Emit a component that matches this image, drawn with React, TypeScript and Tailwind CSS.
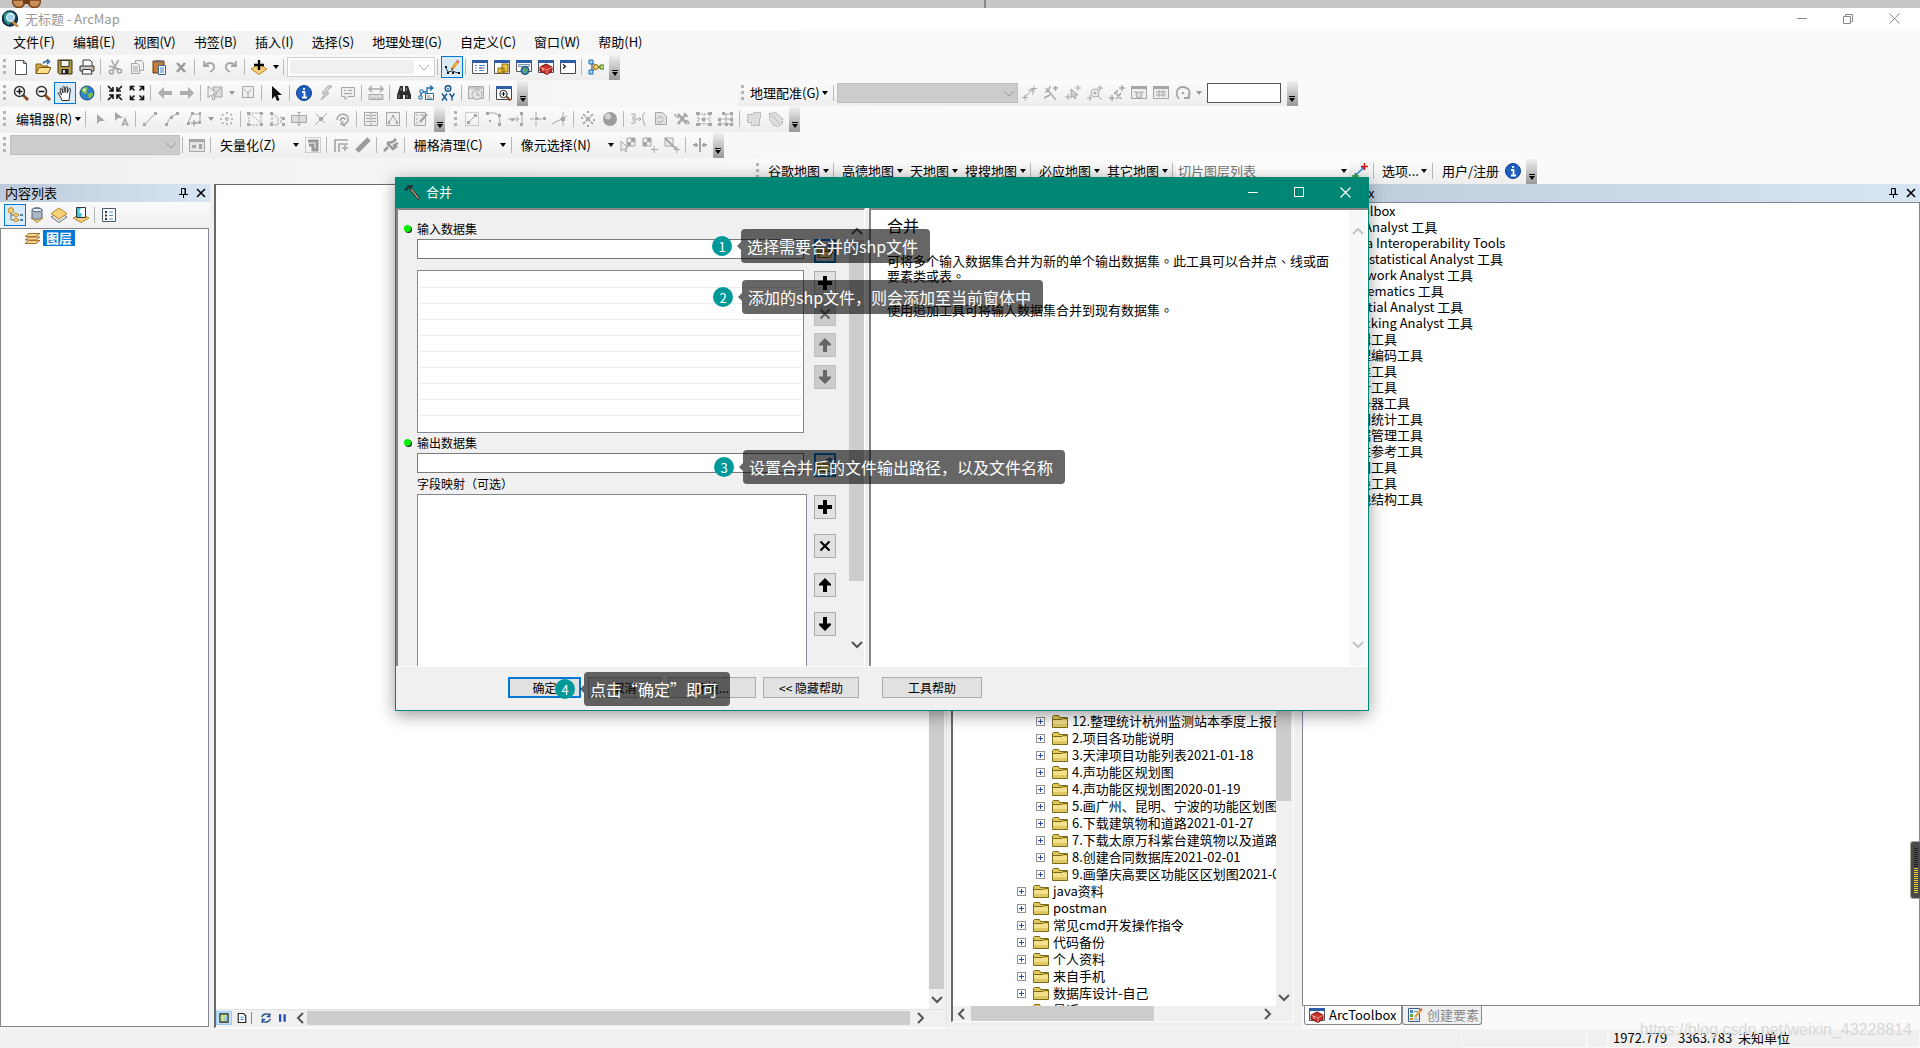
import { useState, type ReactNode } from 'react';

const G = '#a6a6a6';

// 16x16 toolbar glyphs
const ICONS: Record<string, ReactNode> = {
  newFile: <path d="M2.5 1.5h8l3 3v11h-11zM10.5 1.5v3h3" fill="#fff" stroke="#4a5560" />,
  open: (
    <>
      <path d="M1 14V5h5l1 2h6v7z" fill="#d8a93c" stroke="#7a5c14" />
      <path d="M1 14.5l3-6h12l-3 6z" fill="#ffe08a" stroke="#7a5c14" />
      <path d="M8 4.5c1-2 3-2.500 5-2M12 .5l2.500 2L12 5" fill="none" stroke="#1d5fa8" strokeWidth="1.500" />
    </>
  ),
  save: (
    <>
      <path d="M1 1h14v14H2.500L1 13.500z" fill="#b19a4c" stroke="#3c3210" />
      <path d="M4 1.500h8v6H4z" fill="#f4f4f4" stroke="#3c3210" />
      <path d="M4.500 10h7v5h-7z" fill="#222" />
      <path d="M6 11h2v3H6z" fill="#ddd" />
    </>
  ),
  print: (
    <>
      <path d="M4 7V1h7l2 2v4" fill="#fff" stroke="#333" />
      <path d="M1 7h14v5H1z" fill="#c9c9c9" stroke="#333" />
      <path d="M4 10.500h8l1 4.500H3z" fill="#fff" stroke="#333" />
      <path d="M12 8.500h2" stroke="#c79a1e" strokeWidth="1.500" />
    </>
  ),
  cut: (
    <g fill="none" stroke={G} strokeWidth="1.600">
      <path d="M4.500 1l5 10M11.500 1L6 11M2 7l10 3" />
      <circle cx="4.500" cy="13" r="2" />
      <circle cx="12.500" cy="12" r="2" />
    </g>
  ),
  copy: (
    <g fill="#eee" stroke={G}>
      <path d="M6.500 1.500h6l2 2v8h-8z" />
      <path d="M2.500 4.500h6l2 2v8h-8zM4 8h5M4 10h5M4 12h5" />
    </g>
  ),
  paste: (
    <>
      <path d="M2 2h11v12H2z" fill="#c77d33" stroke="#6b3a0e" />
      <path d="M5 1h5v3H5z" fill="#777" />
      <path d="M7.500 6.500h7v9h-7z" fill="#fff" stroke="#3b5f8f" />
      <path d="M9 9h4M9 11h4M9 13h4" stroke="#3b79c4" />
    </>
  ),
  del: <path d="M4 4l8 9M12 4l-8 9" stroke="#9a9a9a" strokeWidth="2.500" />,
  undo: <path d="M3 2v5h5M3.500 7C6 3 12 3 13 7c.5 3-2 5-4 6" fill="none" stroke={G} strokeWidth="1.800" />,
  redo: <path d="M13 2v5H8M12.500 7C10 3 4 3 3 7c-.5 3 2 5 4 6" fill="none" stroke={G} strokeWidth="1.800" />,
  addData: (
    <>
      <path d="M0 10l8-5 8 5-8 5.500z" fill="#f6cf7a" stroke="#b98a30" />
      <path d="M8 1v10M3 6h10" stroke="#000" strokeWidth="2.400" />
    </>
  ),
  editor: (
    <>
      <path d="M2 9l2 4 4-1 6 2" fill="none" stroke="#333" strokeWidth="1" />
      <path d="M1 7h2v2H1zM3 13h2v2H3zM8 13h2v2H8zM14 13h2v2h-2z" fill="#111" />
      <path d="M8 10l6-8" stroke="#e3a83b" strokeWidth="3" />
      <path d="M13 3.500l1.500-2" stroke="#e07a7a" strokeWidth="3" />
      <path d="M7 11.500l1-2.500 1.500 1z" fill="#222" />
    </>
  ),
  winToc: (
    <>
      <path d="M.5 1.500h15v13H.5z" fill="#fff" stroke="#555" />
      <path d="M0 1h16v3H0z" fill="#2d5da8" />
      <path d="M3 6.500h2M7 6.500h6M3 9h2M7 9h6M3 11.500h2M7 11.500h5" stroke="#4a90d0" />
      <path d="M7 9h3" stroke="#d04a3a" />
    </>
  ),
  winCatalog: (
    <>
      <path d="M.5 1.500h15v13H.5z" fill="#fff" stroke="#555" />
      <path d="M0 1h16v3H0z" fill="#2d5da8" />
      <path d="M8 5h6v8H8zM4 9h6v5H4z" fill="#e8c53a" stroke="#8a6b0c" />
    </>
  ),
  winSearch: (
    <>
      <path d="M.5 1.500h15v11H.5z" fill="#fff" stroke="#555" />
      <path d="M0 1h16v3H0z" fill="#2d5da8" />
      <path d="M2.500 5.500h11v2h-11z" fill="#dfe9f4" stroke="#7a98b8" />
      <circle cx="9" cy="11.500" r="4" fill="#3f8ccc" stroke="#245" />
      <path d="M7 10l3-1 1 2-2 3-2-1z" fill="#5fae4c" />
    </>
  ),
  toolbox: (
    <>
      <path d="M.5 1.500h15v12H.5z" fill="#fff" stroke="#555" />
      <path d="M0 1h16v3H0z" fill="#2d5da8" />
      <path d="M2 8l6-3 6 3v4l-5 3.500L2 12z" fill="#c8342b" stroke="#74150f" />
      <path d="M2 8l7 3v4M9 11l5-3" fill="none" stroke="#ee8f87" />
      <path d="M5 9.500v2" stroke="#fff" />
    </>
  ),
  winPython: (
    <>
      <path d="M.5 1.500h15v13H.5z" fill="#fff" stroke="#444" />
      <path d="M0 1h16v3H0z" fill="#2d5da8" />
      <path d="M3 5.500l2.500 2L3 9.500" fill="none" stroke="#111" strokeWidth="1.200" />
    </>
  ),
  model: (
    <>
      <path d="M4 3v10M4 3l4 5M4 13l4-5h5" fill="none" stroke="#333" />
      <path d="M1 1h4v4H1zM1 11h4v4H1z" fill="#9fd4f5" stroke="#1b6fb0" />
      <circle cx="8" cy="8" r="2.400" fill="#f6d65a" stroke="#8a6b0c" />
      <path d="M12 6h4v4h-4z" fill="#b4dc7a" stroke="#4b7d1e" />
    </>
  ),
  zoomIn: (
    <>
      <path d="M10 10l5 5" stroke="#8c4a20" strokeWidth="2.800" />
      <circle cx="6.500" cy="6.500" r="5" fill="#fff" stroke="#333" strokeWidth="1.500" />
      <path d="M6.500 3.500v6M3.500 6.500h6" stroke="#111" strokeWidth="1.600" />
    </>
  ),
  zoomOut: (
    <>
      <path d="M10 10l5 5" stroke="#8c4a20" strokeWidth="2.800" />
      <circle cx="6.500" cy="6.500" r="5" fill="#fff" stroke="#333" strokeWidth="1.500" />
      <path d="M3.500 6.500h6" stroke="#111" strokeWidth="1.600" />
    </>
  ),
  pan: (
    <path
      d="M5 15.500L3 11 .8 8.200c.5-1 1.500-.7 2.200.1L4.500 10 3 4c.4-1 1.400-.8 1.700.2L6 8l-.2-6c.5-1 1.500-.8 1.700 0L8 7.500 9 2c.6-.8 1.500-.5 1.500.5L10.200 8l2-4.500c.7-.6 1.500-.2 1.300.8L12.500 11 12 15.500z"
      fill="#fff"
      stroke="#333"
    />
  ),
  globe: (
    <>
      <circle cx="8" cy="8" r="7" fill="#2f7fcf" stroke="#1f4f86" />
      <path d="M3 4c3-3 6-2 6-1s-2 2-1 4-3 3-4 1-2-2-1-4zM9 9c3-1 5-2 5 0s-3 5-4 4-2-3-1-4z" fill="#7cbb4a" />
      <circle cx="5.500" cy="5" r="1.800" fill="#fff" opacity=".6" />
    </>
  ),
  shrink: (
    <path
      d="M1 1l4.500 4.500M15 1l-4.500 4.500M1 15l4.500-4.500M15 15l-4.500-4.500M6 2v4H2M10 2v4h4M6 14v-4H2M10 14v-4h4"
      fill="none"
      stroke="#111"
      strokeWidth="1.600"
    />
  ),
  expand: (
    <path
      d="M1.500 1.500l4 4M14.500 1.500l-4 4M1.500 14.500l4-4M14.500 14.500l-4-4M1.500 5.500v-4h4M14.500 5.500v-4h-4M1.500 10.500v4h4M14.500 10.500v4h-4"
      fill="none"
      stroke="#111"
      strokeWidth="1.600"
    />
  ),
  back: <path d="M1 8l6-6v4h8v4H7v4z" fill="#adadad" />,
  forward: <path d="M15 8L9 2v4H1v4h8v4z" fill="#adadad" />,
  selectFeat: (
    <g stroke={G}>
      <path d="M6 2h9v10H8z" fill="#dcdcdc" />
      <path d="M9 8l5-5" fill="none" />
      <path d="M1 1v12l3-3 2 5 2-1-2-5h4z" fill="#eee" />
    </g>
  ),
  clearSel: <path d="M2.500 1.500h11v11h-11zM4 4l4 4 3-4M8 8v4" fill="#eee" stroke={G} />,
  pointer: <path d="M4 1v13l3-3 2 5 2.500-1-2-5h4.500z" fill="#111" />,
  info: (
    <>
      <circle cx="8" cy="8" r="7.500" fill="#1f5fc4" stroke="#123e86" />
      <path d="M8 3v2M6 7h2.500v5M6 12.500h5" stroke="#fff" strokeWidth="1.800" fill="none" />
    </>
  ),
  bolt: <path d="M10 1L4 8l3 .5L3 15l8-7-3-.5L14 1z" fill="#d8d8d8" stroke={G} />,
  popup: <path d="M1.500 2.500h13v9H8l-3 3v-3H1.500zM4 5.500h2M8 5.500h4M4 8.500h8" fill="#eee" stroke={G} />,
  measure: (
    <g stroke={G} fill="none">
      <path d="M1 4h14M4 1L1 4l3 3M12 1l3 3-3 3" strokeWidth="1.400" />
      <path d="M1 9.500h14v5H1zM4 12v2M7 12v2M10 12v2M13 12v2" fill="#ddd" />
    </g>
  ),
  find: (
    <>
      <path d="M4 1h3v5l1 1 1-1V1h3l3 9v4H9v-4H7v4H1v-4z" fill="#2e2e2e" />
      <path d="M3 10v3M11 10v3M5 3v3M10.500 3v3" stroke="#8c8c8c" />
    </>
  ),
  route: (
    <>
      <path d="M3 13V7h6V3h6M12 .5L15 3l-3 2.500" fill="none" stroke="#1c6ea4" strokeWidth="1.300" />
      <path d="M1 11h3v3H1zM2 5h3v3H2z" fill="#fff" stroke="#1c6ea4" />
      <path d="M7.500 8.500h8v6h-8z" fill="#fff" stroke="#1c6ea4" />
      <path d="M9 11h3M9 13h5" stroke="#888" />
    </>
  ),
  goXY: (
    <g fill="none" stroke="#1c5f96" strokeWidth="1.500">
      <circle cx="8" cy="3.500" r="2.800" />
      <path d="M8 3v1.500M2 8.500l5 7M7 8.500l-5 7M9.500 8.500L12 12l2.500-3.500M12 12v3.500" />
    </g>
  ),
  time: (
    <g fill="#e6e6e6" stroke={G}>
      <path d="M.5 1.500h15v12H.5zM.5 3h15" />
      <circle cx="9" cy="9.500" r="5" />
      <path d="M9 6v4h3" />
    </g>
  ),
  viewer: (
    <>
      <path d="M.5 1.500h15v13H.5z" fill="#fff" stroke="#444" />
      <path d="M0 1h16v3H0z" fill="#2d5da8" />
      <path d="M10.500 11.500l4 4" stroke="#8c4a20" strokeWidth="2" />
      <circle cx="7.500" cy="9" r="3.700" fill="#fff" stroke="#222" />
      <path d="M7.500 7v4M5.500 9h4" stroke="#111" />
    </>
  ),
  editTool: <path d="M5 3v10l3-3h5z" fill={G} />,
  editNote: (
    <>
      <path d="M1 1v9l3-3h5z" fill={G} />
      <path d="M8 15l3-7 3 7M9 13h4" fill="none" stroke={G} strokeWidth="1.500" />
    </>
  ),
  line: (
    <>
      <path d="M3 13L13 3" stroke={G} />
      <path d="M1 12h3v3H1zM12 1h3v3h-3z" fill={G} />
    </>
  ),
  arc: (
    <>
      <path d="M3 14C4 8 7 5 13 3" stroke={G} fill="none" />
      <path d="M1 12h3v3H1zM6 5h3v3H6zM12 1h3v3h-3z" fill={G} />
    </>
  ),
  trace: (
    <>
      <path d="M2 12L6 3h8v9H9" stroke={G} fill="none" />
      <path d="M5 1h3v3H5zM13 1h2v3h-2zM1 11h3v3H1zM12 10h3v3h-3z" fill={G} />
      <path d="M8 9v6M5 12h6" stroke="#888" />
    </>
  ),
  point: <path d="M8 1v3M8 12v3M1 8h3M12 8h3M3 3l2 2M13 3l-2 2M3 13l2-2M13 13l-2-2M6 8h4M8 6v4" stroke={G} strokeWidth="1.500" strokeDasharray="2 1" />,
  verts: (
    <>
      <path d="M2 2h12v12H2zM2 2l12 10" fill="none" stroke={G} strokeDasharray="2 1" />
      <path d="M0 1h3v3H0zM13 1h3v3h-3zM0 12h3v3H0zM13 12h3v3h-3z" fill={G} />
    </>
  ),
  reshape: (
    <>
      <path d="M3 2v12M3 2l6 5v7H3M12 5v8" fill="none" stroke={G} strokeDasharray="3 1" />
      <path d="M1 1h3v3H1zM1 12h3v3H1zM13 6h3v3h-3zM13 12h3v3h-3z" fill={G} />
    </>
  ),
  cutPoly: <path d="M.5 4.500h15v7H.5zM8 1v14M6.500 13.500h3M6.500 1.500h3" fill="#ddd" stroke={G} />,
  split: (
    <>
      <path d="M2 14L14 2M3 3l9 9" stroke={G} />
      <path d="M6 6h4v4H6z" fill={G} />
    </>
  ),
  rotate: <path d="M2 9C2 2 13 1 13 8c0 3-2 5-5 5M5 10c1-4 5-4 5-1M8 10l-2 3 4 2" fill="none" stroke={G} strokeWidth="1.600" />,
  attrs: <path d="M1.500 1.500h13v13h-13zM8 1.500v13M3 4.500h4M3 7.500h4M3 10.500h4M9 4.500h4M9 7.500h4M9 10.500h4" fill="#eee" stroke={G} />,
  sketch: (
    <>
      <path d="M1.500 1.500h13v13h-13z" fill="#eee" stroke={G} />
      <path d="M4 11l4-6 4 6" fill="none" stroke={G} />
      <path d="M3 10h2v3H3zM7 4h2v2H7zM11 10h2v3h-2z" fill={G} />
    </>
  ),
  createGray: (
    <>
      <path d="M1.500 1.500h11v13h-11zM3 4h2M3 8h2M3 12h2M7 4h4" fill="#eee" stroke={G} />
      <path d="M7 11l7-8" stroke={G} strokeWidth="2.500" />
    </>
  ),
  create: (
    <>
      <path d="M1.500 1.500h11v13h-11z" fill="#e7f0f8" stroke="#3b5f8f" />
      <path d="M3 3h3v3H3z" fill="#3f8ccc" />
      <path d="M3 7h3v3H3z" fill="#62a845" />
      <path d="M3 11h3v2H3z" fill="#d8832a" />
      <path d="M7 4.500h4M7 12h4" stroke="#7a98b8" />
      <path d="M8 10l6-7" stroke="#e3a83b" strokeWidth="2.500" />
      <path d="M13.500 3.500L15 2" stroke="#d46a6a" strokeWidth="2.500" />
    </>
  ),
  seg: (
    <>
      <path d="M1.500 1.500h13v13h-13z" fill="none" stroke={G} strokeDasharray="1 1" />
      <path d="M4 12l8-8" stroke={G} />
      <path d="M3 10h3v3H3zM10 3h3v3h-3z" fill={G} />
    </>
  ),
  fillet: (
    <>
      <path d="M1 2h6c5 0 7 3 7 12" fill="none" stroke={G} />
      <path d="M0 1h3v3H0zM12 3h3v3h-3zM12 12h3v3h-3zM3 9h2v2H3z" fill={G} />
    </>
  ),
  extend: (
    <>
      <path d="M0 8h10M14 1v14M8 5.500l3 2.500-3 2.500" fill="none" stroke={G} />
      <path d="M12 1h3v3h-3zM12 12h3v3h-3zM3 7h3v3H3z" fill={G} />
    </>
  ),
  trim: (
    <>
      <path d="M6 1v14M0 8h6M8 8h8" fill="none" stroke={G} strokeDasharray="4 1" />
      <path d="M5 6h3v3H5zM13 6h3v3h-3z" fill={G} />
    </>
  ),
  inter: (
    <>
      <path d="M0 13L15 5M11 1v14" fill="none" stroke={G} />
      <path d="M9 6h4v4H9z" fill={G} />
    </>
  ),
  explode: <path d="M8 8L3 3M8 8l5-5M8 8l-5 5M8 8l5 5M1 7h2M13 9h2M7 1h2M7 15h2" stroke={G} strokeWidth="1.800" strokeDasharray="3 1" />,
  sphere: (
    <>
      <circle cx="8" cy="8" r="7" fill="#9c9c9c" />
      <circle cx="6" cy="5.500" r="3" fill="#d4d4d4" />
    </>
  ),
  align: <path d="M1 3h4v9H1M3 5v5M6 8h5M9 6l2 2-2 2M15 1c-4 3-2 9 0 14" fill="none" stroke={G} />,
  replaceG: <path d="M3.500 1.500h7l4 4v8h-11zM5 8c1-3 5-3 6 0M11 9c-1 3-5 3-6 1" fill="#e2e2e2" stroke={G} />,
  wrench: (
    <>
      <path d="M4 3l9 10M12 3L4 13" stroke={G} strokeWidth="2.600" fill="none" />
      <path d="M1 3c0 3 3 4 5 2M15 13c0-3-3-4-4-3M10 2l4 4" stroke={G} strokeWidth="1.500" fill="none" />
    </>
  ),
  topo: (
    <>
      <path d="M2 3h12v10H2zM2 8h12M8 3v10" fill="none" stroke={G} strokeDasharray="2 1" />
      <path d="M0 1h4v3H0zM12 1h4v3h-4zM0 12h4v3H0zM12 12h4v3h-4zM6 7h3v3H6z" fill={G} />
    </>
  ),
  grid: (
    <>
      <path d="M5 3h9v10H2V8h12M8 3v10" fill="none" stroke={G} />
      <path d="M4 1h3v3H4zM12 1h3v3h-3zM0 7h3v3H0zM12 7h3v3h-3zM0 12h3v3H0zM7 12h3v3H7zM12 12h3v3h-3z" fill={G} />
    </>
  ),
  union: <path d="M1.500 3.500h6v-2h7v6h-1v7h-8v-3h-4z" fill="#ddd" stroke={G} strokeDasharray="2 1" />,
  blob: <path d="M1.500 2.500l6-1 7 6v5l-4 3-5-1-4-6zM4 4l7 8" fill="#ddd" stroke={G} strokeDasharray="2 1" />,
  panel: (
    <>
      <path d="M.5 2.500h15v12H.5z" fill="#e4e4e4" stroke={G} />
      <path d="M0 2h16v3H0zM3 8h4v3H3zM10 7h3v5h-3z" fill={G} />
    </>
  ),
  spiral: (
    <>
      <path d="M.5 .5h15v15H.5z" fill="none" stroke={G} strokeDasharray="1 1" />
      <path d="M3 4h9v9H8V8H4" fill="none" stroke="#999" strokeWidth="3" />
    </>
  ),
  corner: <path d="M2 15V3h13M6 15V7h9M9 11h6M12 8v6" fill="none" stroke={G} strokeWidth="1.600" />,
  pipe: <path d="M2 14L14 2" stroke="#9c9c9c" strokeWidth="5" />,
  plug: <path d="M1 14l4-4M4 6l6 6 4-3M4 6l6-1M10 5l3-3M10 9l5-3" stroke="#999" strokeWidth="2.500" fill="none" />,
  cellSel: (
    <>
      <path d="M7 1h8v8H7z" fill="#eee" stroke={G} />
      <path d="M11 1h4v4h-4zM7 5h4v4H7z" fill={G} />
      <path d="M1 4v10l3-2 2 3 1-1-2-3h3z" fill="#eee" stroke={G} />
    </>
  ),
  cellAdd: (
    <>
      <path d="M1 1h8v8H1z" fill="#eee" stroke={G} />
      <path d="M5 1h4v4H5zM1 5h4v4H1z" fill={G} />
      <path d="M12 9v7M9 12.500h7" stroke={G} />
    </>
  ),
  cellLine: (
    <>
      <path d="M1 1h8v8H1z" fill="#eee" stroke={G} />
      <path d="M1 1l11 11" stroke={G} strokeWidth="2" />
      <path d="M13 9v7M10 12.500h6" stroke={G} />
    </>
  ),
  gapTool: <path d="M8 1v14M1 8h5M10 8h5M4 6v4M12 6v4" stroke={G} strokeWidth="2" />,
  ctrl: (
    <>
      <path d="M3 13l9-9M7 5h5v5" fill="none" stroke={G} />
      <path d="M1 12.500h6M4 9.500v6M10 3.500h6M13 .5v6" stroke={G} />
    </>
  ),
  ctrlColor: (
    <>
      <path d="M4 12l8-8M9 4h3v3" fill="none" stroke="#1f8fe0" strokeWidth="1.500" />
      <path d="M0 13h7M3.500 10v6" stroke="#1a9a2c" strokeWidth="1.500" />
      <path d="M9 3.500h7M12.500 0v7" stroke="#d11" strokeWidth="1.500" />
    </>
  ),
  wand: <path d="M3 3l10 12M2 7l3-1M7 1l-1 4M10 3h5M12.500 1v5M1 13l6-3" stroke={G} strokeWidth="1.400" fill="none" />,
  ctrlPick: <path d="M0 12h5M3 9v6M10 3h6M13 0v6M6 4v9l2-2 2 3 1-1-1-3h3z" fill="#ccc" stroke={G} />,
  ctrlZoom: (
    <g stroke={G} fill="none">
      <path d="M0 13h5M3 10v6M10 3h6M13 0v6M11 11l4 4" />
      <circle cx="8" cy="8" r="4" />
      <path d="M6 8h4M8 6v4" />
    </g>
  ),
  ctrlDel: <path d="M0 13h5M3 10v6M10 3h6M13 0v6M7 8l5 6M12 8l-5 6M5 9l4-4" stroke={G} strokeWidth="1.500" />,
  linkWin: (
    <>
      <path d="M.5 1.500h15v12H.5zM3 7h3M10 7h3M5 10h6" fill="#eee" stroke={G} />
      <path d="M0 1h16v3H0z" fill={G} />
      <circle cx="8" cy="10" r="3" fill="#ddd" stroke={G} />
    </>
  ),
  linkTable: (
    <>
      <path d="M.5 1.500h15v12H.5zM3 7h10M3 10h10M6 5v7M10 5v7" fill="#eee" stroke={G} />
      <path d="M0 1h16v3H0z" fill={G} />
    </>
  ),
  rotateCw: (
    <>
      <path d="M4 14C-1 7 3 2 8 2s9 5 5 10M14 8v5H9" fill="none" stroke={G} strokeWidth="1.800" />
      <circle cx="8" cy="8" r="1.300" fill={G} />
    </>
  ),
  tocOrder: (
    <>
      <path d="M4 4v9h5M4 8h5" fill="none" stroke="#777" />
      <circle cx="4" cy="3.500" r="2.800" fill="#f6cf7a" stroke="#b98a30" />
      <path d="M6 8l3-2 3 2-3 2zM6 13l3-2 3 2-3 2z" fill="#f6cf7a" stroke="#b98a30" />
      <path d="M13 8h3M13 13h3" stroke="#1c5f96" strokeWidth="1.500" />
    </>
  ),
  tocSource: (
    <>
      <path d="M2 11l6-3 6 3-6 4.500z" fill="#f6cf7a" stroke="#b98a30" />
      <path d="M3 3c0-3 10-3 10 0v7c0 3-10 3-10 0z" fill="#a9b8c8" stroke="#5a6c80" />
      <ellipse cx="8" cy="3" rx="5" ry="1.800" fill="#e8eef4" stroke="#5a6c80" />
    </>
  ),
  tocVisible: (
    <>
      <path d="M0 10l8-5 8 5-8 5.500z" fill="#ddd" stroke="#777" />
      <path d="M0 6.500L8 1l8 5.500L8 12z" fill="#f6cf7a" stroke="#b98a30" />
    </>
  ),
  tocSelect: (
    <>
      <path d="M0 11l8-4 8 4-8 4.500z" fill="#f6cf7a" stroke="#b98a30" />
      <path d="M3.500 .5h9v10h-9z" fill="#fff" stroke="#333" />
      <path d="M4 1h4l-2 4 3 2-1 3H4z" fill="#36c6dd" />
    </>
  ),
  tocOptions: (
    <>
      <path d="M1.500 1.500h13v13h-13z" fill="#fff" stroke="#4a5a6a" />
      <path d="M4 4h2v2H4zM4 7.500h2v2H4zM4 11h2v2H4z" fill="#234" />
      <path d="M8 5h4M8 8.500h4M8 12h4" stroke="#4a90d0" />
    </>
  ),
  layers: <path d="M1 13.500l4-3h11l-4 3zM1 10l4-3h11l-4 3zM1 6.500l4-3h11l-4 3z" fill="#f9d793" stroke="#a8722a" />,
  hammer: (
    <>
      <path d="M6 4l9 11" stroke="#3a2a20" strokeWidth="2.800" />
      <path d="M7 5l7.500 9.500" stroke="#d6b9a0" strokeWidth="1.200" />
      <path d="M0 6l4-5 6 0-3 3-2 0-2 3z" fill="#23383a" />
    </>
  ),
  app: (
    <>
      <circle cx="7.500" cy="8" r="7.200" fill="#123a5c" stroke="#0c2238" />
      <path d="M2 4c2-3 6-3 8-2l3 3-2 5-5 4c-4-3-5-6-4-10z" fill="#2f9c8c" />
      <path d="M9 10l6 6" stroke="#c98a3c" strokeWidth="2.500" />
      <circle cx="8" cy="7" r="3.600" fill="#9fd0f0" stroke="#fff" strokeWidth="1" />
    </>
  ),
  mapView: (
    <>
      <path d="M2.500 2.500h11v11h-11z" fill="#c4e08c" stroke="#222" strokeWidth="1.500" />
      <path d="M8 9l4-5v8H9z" fill="#8cc4e8" />
    </>
  ),
  pageView: (
    <>
      <path d="M3 2h7l3 3v9H3z" fill="#fff" stroke="#222" strokeWidth="1.500" />
      <path d="M6 7h4M6 10h4" stroke="#2f7fcf" strokeWidth="1.500" />
    </>
  ),
  refresh: <path d="M2.500 7C3 2 11 1 13 5M13 1.500V6H9M13.500 9C13 14 5 15 3 11M3 14.500V10h4" fill="none" stroke="#1c4f8f" strokeWidth="1.800" />,
  pause: <path d="M4 3h3v10H4zM10 3h3v10h-3z" fill="#1f4fa8" />,
};

function Icon({ name, size = 16 }: { name: string; size?: number }) {
  return (
    <svg width={size} height={size} viewBox="0 0 16 16" className="shrink-0" aria-hidden="true">
      {ICONS[name]}
    </svg>
  );
}

function Tool({ icon, active, disabled }: { icon: string; active?: boolean; disabled?: boolean }) {
  return (
    <button
      type="button"
      aria-label={icon}
      disabled={disabled}
      className={`flex h-[22px] w-[22px] shrink-0 items-center justify-center ${
        active ? 'border border-[#0078d7] bg-[#d9ebf9]' : ''
      }`}
    >
      <Icon name={icon} />
    </button>
  );
}

const Tools = ({ icons }: { icons: string[] }) => (
  <>
    {icons.map(i => (
      <Tool key={i} icon={i} />
    ))}
  </>
);

const Sep = () => <span className="mx-[2px] h-4 w-px shrink-0 border-l border-[#b8b8b8] pl-px" />;

function Caret({ gray }: { gray?: boolean }) {
  return (
    <span className="flex w-[11px] shrink-0 justify-center">
      <span
        className={`border-x-[3px] border-t-[4px] border-x-transparent ${gray ? 'border-t-[#999]' : 'border-t-black'}`}
      />
    </span>
  );
}

function Bar({ children, className = '' }: { children: ReactNode; className?: string }) {
  return (
    <div className={`flex h-[25px] shrink-0 bg-gradient-to-b from-[#fbfbfb] to-[#eeeeee] pl-[3px] ${className}`}>
      <div className="flex items-center pb-[2px]">
        <span className="mr-[3px] h-[15px] w-1 shrink-0 border-l-[3px] border-dotted border-[#b4b4b4]" />
        {children}
      </div>
      <button
        type="button"
        aria-label="更多"
        className="ml-[2px] flex w-[11px] shrink-0 flex-col items-center justify-end gap-px bg-gradient-to-b from-[#f0f0f0] to-[#999] pb-1"
      >
        <span className="h-px w-[6px] bg-black" />
        <span className="border-x-[3px] border-t-[4px] border-x-transparent border-t-black" />
      </button>
    </div>
  );
}

type Dir = 'up' | 'down' | 'left' | 'right';

const CHEVRON: Record<Dir, string> = {
  up: 'M1 8l5-5 5 5',
  down: 'M1 4l5 5 5-5',
  left: 'M8 1L3 6l5 5',
  right: 'M4 1l5 5-5 5',
};

function Chevron({ dir, color = '#555', width = 2 }: { dir: Dir; color?: string; width?: number }) {
  return (
    <svg width="12" height="12" viewBox="0 0 12 12" className="shrink-0" aria-hidden="true">
      <path d={CHEVRON[dir]} fill="none" stroke={color} strokeWidth={width} />
    </svg>
  );
}

function GrayCombo({ label, className }: { label: string; className: string }) {
  return (
    <span className={`flex h-5 shrink-0 items-center border border-[#bfbfbf] bg-[#ccc] pr-[2px] ${className}`}>
      <select aria-label={label} disabled className="min-w-0 flex-1 appearance-none">
        <option></option>
      </select>
      <Chevron dir="down" color="#999" width={1} />
    </span>
  );
}

function MapMenu({ name }: { name: string }) {
  return (
    <button type="button" className="flex shrink-0 items-center pl-[5px]">
      {name}
      <Caret />
    </button>
  );
}

const MENUS = ['文件(F)', '编辑(E)', '视图(V)', '书签(B)', '插入(I)', '选择(S)', '地理处理(G)', '自定义(C)', '窗口(W)', '帮助(H)'];

function Header() {
  return (
    <header className="flex flex-col">
      <div className="flex h-2 items-start overflow-hidden bg-[#c6c6c6]">
        <svg width="29" height="8" viewBox="0 0 29 8" className="ml-3" aria-hidden="true">
          <path
            d="M.5 0c0 4 2 7.500 6 7.500 3 0 5-1.500 6-4.500h4c1 3 3 4.500 6 4.500 4 0 6-3.500 6-7.500z"
            fill="#c98f58"
            stroke="#7a431b"
            strokeWidth="1.500"
          />
          <path d="M11 0h7v4h-7z" fill="#6b3a18" />
        </svg>
        <span className="ml-[943px] h-2 w-[2px] bg-[#888]" />
      </div>
      <div className="flex h-[23px] items-center bg-white pb-[2px] pl-[2px]">
        <Icon name="app" size={17} />
        <span className="ml-[6px] flex-1 text-[13px] text-[#999]">无标题 - ArcMap</span>
        <div className="mr-[3px] flex text-[#888]">
          <button type="button" aria-label="最小化" className="flex h-5 w-[46px] items-center justify-center">
            <span className="h-px w-[10px] bg-[#888]" />
          </button>
          <button type="button" aria-label="还原" className="flex h-5 w-[46px] items-center justify-center">
            <svg width="10" height="10" viewBox="0 0 10 10">
              <path d="M.5 2.500h7v7h-7zM2.500 2.500v-2h7v7h-2" fill="none" stroke="#888" />
            </svg>
          </button>
          <button type="button" aria-label="关闭" className="flex h-5 w-[46px] items-center justify-center">
            <svg width="11" height="11" viewBox="0 0 11 11">
              <path d="M.5 .5l10 10M10.500 .5l-10 10" stroke="#888" />
            </svg>
          </button>
        </div>
      </div>
      <div className="bg-gradient-to-r from-[#f0f0f0] to-[#fafafa] to-50%">
        <nav className="flex h-6 items-center pb-[2px] pl-1">
          {MENUS.map(m => (
            <button key={m} type="button" className="px-[9px] whitespace-nowrap">
              {m}
            </button>
          ))}
        </nav>
        <div className="flex flex-col gap-px">
          <div className="flex">
            <Bar>
              <Tools icons={['newFile', 'open', 'save', 'print']} />
              <Sep />
              <Tools icons={['cut', 'copy', 'paste', 'del']} />
              <Sep />
              <Tools icons={['undo', 'redo']} />
              <Sep />
              <Tool icon="addData" />
              <Caret />
              <Sep />
              <span className="flex h-5 w-[148px] items-center border border-[#d0d0d0] bg-white p-[2px] pr-1">
                <select aria-label="比例" disabled className="h-[14px] min-w-0 flex-1 appearance-none bg-[#f0f0f0]">
                  <option></option>
                </select>
                <span className="ml-1 flex">
                  <Chevron dir="down" color="#aaa" width={1} />
                </span>
              </span>
              <Sep />
              <Tool icon="editor" active />
              <Sep />
              <Tools icons={['winToc', 'winCatalog', 'winSearch', 'toolbox', 'winPython']} />
              <Sep />
              <Tool icon="model" />
            </Bar>
          </div>
          <div className="flex">
            <Bar>
              <Tools icons={['zoomIn', 'zoomOut']} />
              <Tool icon="pan" active />
              <Tool icon="globe" />
              <Sep />
              <Tools icons={['shrink', 'expand']} />
              <Sep />
              <Tools icons={['back', 'forward']} />
              <Sep />
              <Tool icon="selectFeat" />
              <Caret gray />
              <Tool icon="clearSel" />
              <Sep />
              <Tool icon="pointer" />
              <Sep />
              <Tools icons={['info', 'bolt', 'popup']} />
              <Sep />
              <Tool icon="measure" />
              <Sep />
              <Tools icons={['find', 'route', 'goXY']} />
              <Sep />
              <Tool icon="time" />
              <Sep />
              <Tool icon="viewer" />
            </Bar>
            <Bar className="ml-[210px]">
              <button type="button" className="flex items-center pl-[2px]">
                地理配准(G)
                <Caret />
              </button>
              <Sep />
              <GrayCombo label="图层" className="w-[181px]" />
              <Tools icons={['ctrl', 'wand', 'ctrlPick', 'ctrlZoom', 'ctrlDel', 'linkWin', 'linkTable', 'rotateCw']} />
              <Caret gray />
              <input aria-label="旋转角度" className="mr-1 ml-[2px] h-5 w-[74px] border border-[#555] bg-white px-1" />
            </Bar>
          </div>
          <div className="flex">
            <Bar>
              <button type="button" className="flex items-center pl-[6px]">
                编辑器(R)
                <Caret />
              </button>
              <Sep />
              <Tools icons={['editTool', 'editNote']} />
              <Sep />
              <Tools icons={['line', 'arc', 'trace']} />
              <Caret gray />
              <Tool icon="point" />
              <Sep />
              <Tools icons={['verts', 'reshape', 'cutPoly', 'split', 'rotate']} />
              <Sep />
              <Tools icons={['attrs', 'sketch']} />
              <Sep />
              <Tool icon="createGray" />
            </Bar>
            <Bar className="ml-[6px]">
              <Tools icons={['seg', 'fillet', 'extend', 'trim', 'inter']} />
              <Sep />
              <Tools icons={['explode', 'sphere']} />
              <Sep />
              <Tools icons={['align', 'replaceG', 'wrench', 'topo', 'grid']} />
              <Sep />
              <Tools icons={['union', 'blob']} />
            </Bar>
          </div>
          <div className="flex">
            <Bar>
              <GrayCombo label="栅格图层" className="w-[170px]" />
              <Sep />
              <Tool icon="panel" />
              <Sep />
              <button type="button" className="flex items-center gap-[15px] pl-[6px]">
                矢量化(Z)
                <Caret />
              </button>
              <Tool icon="spiral" />
              <Sep />
              <Tools icons={['corner', 'pipe']} />
              <Sep />
              <Tool icon="plug" />
              <Sep />
              <button type="button" className="flex items-center gap-[15px] pl-[6px]">
                栅格清理(C)
                <Caret />
              </button>
              <Sep />
              <button type="button" className="flex items-center gap-[15px] pl-[6px]">
                像元选择(N)
                <Caret />
              </button>
              <Tools icons={['cellSel', 'cellAdd', 'cellLine']} />
              <Sep />
              <Tool icon="gapTool" />
            </Bar>
          </div>
          <div className="flex">
            <Bar className="ml-[753px]">
              <MapMenu name="谷歌地图" />
              <Sep />
              <MapMenu name="高德地图" />
              <MapMenu name="天地图" />
              <MapMenu name="搜搜地图" />
              <Sep />
              <MapMenu name="必应地图" />
              <MapMenu name="其它地图" />
              <Sep />
              <span className="flex h-5 w-[173px] items-center bg-white">
                <select aria-label="切片图层" className="min-w-0 flex-1 appearance-none pl-[2px] text-[#777]">
                  <option>切片图层列表</option>
                </select>
                <Caret />
              </span>
              <Tool icon="ctrlColor" />
              <Sep />
              <MapMenu name="选项..." />
              <Sep />
              <button type="button" className="pr-[3px] pl-[6px]">
                用户/注册
              </button>
              <Tool icon="info" />
            </Bar>
          </div>
        </div>
      </div>
    </header>
  );
}

function PaneTitle({ title }: { title: string }) {
  return (
    <div className="flex h-[18px] items-center bg-gradient-to-r from-[#bccada] to-[#d8e6f4] pr-1 pl-[5px]">
      <h2 className="flex-1">{title}</h2>
      <button type="button" aria-label="固定" className="mr-2">
        <svg width="9" height="10" viewBox="0 0 9 10">
          <path d="M2.500 6V.5h4V6M6 1v5M0 6.500h9M4.500 7v3" fill="none" stroke="#000" />
        </svg>
      </button>
      <button type="button" aria-label="关闭">
        <svg width="10" height="10" viewBox="0 0 10 10">
          <path d="M1 1l8 8M9 1L1 9" stroke="#000" strokeWidth="1.600" />
        </svg>
      </button>
    </div>
  );
}

function Contents() {
  return (
    <aside className="flex w-[210px] shrink-0 flex-col pb-px">
      <PaneTitle title="内容列表" />
      <div className="flex h-[26px] items-center bg-gradient-to-b from-[#fbfbfb] to-[#f0f0f0] pl-1">
        <Tool icon="tocOrder" active />
        <Tools icons={['tocSource', 'tocVisible', 'tocSelect']} />
        <Sep />
        <Tool icon="tocOptions" />
      </div>
      <div className="mr-px flex-1 border border-[#828790] bg-white pt-px">
        <div className="flex h-4 items-center gap-[3px] pl-[23px]">
          <Icon name="layers" />
          <span className="bg-[#0078d7] px-[3px] text-[13px] leading-4 font-bold text-white">图层</span>
        </div>
      </div>
    </aside>
  );
}

function MapArea() {
  return (
    <main className="mr-1 flex min-w-0 flex-1 flex-col border-t border-r border-b border-l-2 border-t-[#696969] border-r-[#e3e3e3] border-b-white border-l-[#696969]">
      <div className="flex min-h-0 flex-1">
        <div className="flex-1 bg-white" />
        <div className="flex w-[17px] flex-col items-center bg-[#f0f0f0] pr-[2px]">
          <div className="w-full flex-1 bg-[#cdcdcd]" />
          <div className="flex h-5 items-center">
            <Chevron dir="down" />
          </div>
        </div>
      </div>
      <div className="flex h-[18px] items-center border-t border-[#e3e3e3] bg-[#f0f0f0] pr-5 pb-[2px]">
        <span className="flex h-[14px] w-4 items-center justify-center border border-[#99cdf5] bg-[#c4e0f5]">
          <Icon name="mapView" size={12} />
        </span>
        <span className="flex w-[19px] justify-center">
          <Icon name="pageView" size={12} />
        </span>
        <span className="mr-2 h-3 w-px bg-[#888]" />
        <span className="mr-1 flex">
          <Icon name="refresh" size={12} />
        </span>
        <Icon name="pause" size={12} />
        <span className="ml-[7px] flex">
          <Chevron dir="left" />
        </span>
        <span className="h-[14px] flex-1 bg-[#cdcdcd]" />
        <span className="ml-1 flex">
          <Chevron dir="right" />
        </span>
      </div>
    </main>
  );
}

const FOLDERS: { name: string; deep?: boolean }[] = [
  { name: '12.整理统计杭州监测站本季度上报日期', deep: true },
  { name: '2.项目各功能说明', deep: true },
  { name: '3.天津项目功能列表2021-01-18', deep: true },
  { name: '4.声功能区规划图', deep: true },
  { name: '4.声功能区规划图2020-01-19', deep: true },
  { name: '5.画广州、昆明、宁波的功能区划图', deep: true },
  { name: '6.下载建筑物和道路2021-01-27', deep: true },
  { name: '7.下载太原万科紫台建筑物以及道路', deep: true },
  { name: '8.创建合同数据库2021-02-01', deep: true },
  { name: '9.画肇庆高要区功能区区划图2021-02', deep: true },
  { name: 'java资料' },
  { name: 'postman' },
  { name: '常见cmd开发操作指令' },
  { name: '代码备份' },
  { name: '个人资料' },
  { name: '来自手机' },
  { name: '数据库设计-自己' },
  { name: '最近' },
];

function Catalog() {
  return (
    <section className="mt-3 mr-2 mb-[6px] flex w-[343px] shrink-0 flex-col border-r border-b border-l-2 border-r-white border-b-white border-l-[#696969] bg-[#f0f0f0]">
      <div className="flex min-h-0 flex-1">
        <div className="flex min-w-0 flex-1 flex-col justify-end bg-white">
          <ul className="h-[293px] overflow-hidden">
            {FOLDERS.map(f => (
              <li key={f.name} className={`flex h-[17px] items-center whitespace-nowrap ${f.deep ? 'pl-[83px]' : 'pl-[64px]'}`}>
                <button
                  type="button"
                  aria-label="展开"
                  className="flex h-[9px] w-[9px] shrink-0 items-center justify-center border border-[#919191] bg-white"
                >
                  <svg width="5" height="5" viewBox="0 0 5 5">
                    <path d="M2.500 0v5M0 2.500h5" stroke="#2b4a9c" />
                  </svg>
                </button>
                <svg width="16" height="14" viewBox="0 0 16 14" className="mr-[4px] ml-[7px] shrink-0" aria-hidden="true">
                  <path d="M.5 12.500v-11l1-1h5l1 2h8v10z" fill="#e0c85a" stroke="#7d6b1c" />
                  <path d="M1 5h14v7H1z" fill="#f3e08c" />
                  <path d="M1 9h14v3H1z" fill="#dfc862" />
                  <path d="M1 4.500h9l1-1h4" stroke="#7d6b1c" fill="none" />
                </svg>
                <span className="pb-[2px]">{f.name}</span>
              </li>
            ))}
          </ul>
        </div>
        <div className="flex w-[17px] flex-col items-center justify-between pr-[2px]">
          <div className="h-[605px] w-full bg-[#cdcdcd]" />
          <div className="flex h-[19px] items-center">
            <Chevron dir="down" />
          </div>
        </div>
      </div>
      <div className="flex h-[15px] items-center pl-[3px]">
        <span className="mr-[3px] flex">
          <Chevron dir="left" />
        </span>
        <span className="h-full w-[183px] bg-[#cdcdcd]" />
        <span className="mr-5 ml-auto flex">
          <Chevron dir="right" />
        </span>
      </div>
    </section>
  );
}

const TOOLBOXES = [
  '3D Analyst 工具',
  'Data Interoperability Tools',
  'Geostatistical Analyst 工具',
  'Network Analyst 工具',
  'Schematics 工具',
  'Spatial Analyst 工具',
  'Tracking Analyst 工具',
  '编辑工具',
  '地理编码工具',
  '多维工具',
  '分析工具',
  '服务器工具',
  '空间统计工具',
  '数据管理工具',
  '线性参考工具',
  '制图工具',
  '转换工具',
  '宗地结构工具',
];

function ToolboxPane() {
  return (
    <aside className="flex w-[618px] shrink-0 flex-col">
      <PaneTitle title="ArcToolbox" />
      <div className="flex-1 border border-[#828790] bg-white">
        <div className="flex h-4 items-center pl-[25px]">ArcToolbox</div>
        <ul className="pl-[42px]">
          {TOOLBOXES.map(t => (
            <li key={t} className="h-4 leading-4 whitespace-pre">
              {t}
            </li>
          ))}
        </ul>
      </div>
      <div className="flex h-[22px] items-start bg-[#fafafa] pl-[2px]" role="tablist">
        <button
          type="button"
          role="tab"
          aria-selected="true"
          className="flex h-[19px] w-[98px] items-center gap-1 rounded-b-[3px] border border-t-0 border-[#828790] bg-white pl-1"
        >
          <Icon name="toolbox" />
          ArcToolbox
        </button>
        <button
          type="button"
          role="tab"
          aria-selected="false"
          className="flex h-[19px] w-[80px] items-center gap-1 rounded-b-[3px] border border-t-0 border-[#828790] bg-[#f0f0f0] pl-1 text-[#888]"
        >
          <Icon name="create" />
          创建要素
        </button>
      </div>
    </aside>
  );
}

type Glyph = 'plus' | 'x' | 'up' | 'down' | 'folder';

const GLYPHS: Record<Exclude<Glyph, 'folder'>, ReactNode> = {
  plus: <path d="M7 0v14M0 7h14" stroke="currentColor" strokeWidth="4" />,
  x: <path d="M2.500 2.500l9 9M11.500 2.500l-9 9" stroke="currentColor" strokeWidth="2.200" />,
  up: <path d="M7 0l6 6v1.500H9V14H5V7.500H1V6z" fill="currentColor" />,
  down: <path d="M7 14l6-6V6.500H9V0H5v6.500H1V8z" fill="currentColor" />,
};

function SideButton({ glyph, label, disabled }: { glyph: Glyph; label: string; disabled?: boolean }) {
  return (
    <button
      type="button"
      aria-label={label}
      disabled={disabled}
      className={`flex h-6 w-[22px] shrink-0 items-center justify-center ${
        glyph === 'folder'
          ? 'border-2 border-[#0078d7] bg-[#e1e1e1]'
          : disabled
            ? 'border border-[#bfbfbf] bg-[#ccc] text-[#666]'
            : 'border border-[#adadad] bg-[#e1e1e1] text-black'
      }`}
    >
      {glyph === 'folder' ? (
        <Icon name="open" />
      ) : (
        <svg width="14" height="14" viewBox="0 0 14 14" aria-hidden="true">
          {GLYPHS[glyph]}
        </svg>
      )}
    </button>
  );
}

function FieldLabel({ id, text, required }: { id: string; text: string; required?: boolean }) {
  return (
    <label htmlFor={id} className="flex h-5 items-center pb-px text-[12px]">
      <span className="flex w-[13px] shrink-0">
        {required && <span className="h-[7px] w-[7px] rounded-full bg-[#00f000] shadow-[1px_1px_0_#222]" />}
      </span>
      {text}
    </label>
  );
}

const FOOT_BTN = 'flex h-[21px] items-center justify-center border border-[#adadad] bg-[#e1e1e1] text-[12px] whitespace-nowrap';

function MergeDialog() {
  const [input, setInput] = useState('');
  const [output, setOutput] = useState('');

  return (
    <div
      role="dialog"
      aria-label="合并"
      className="absolute top-[177px] left-[395px] w-[974px] border border-[#008675] bg-[#f0f0f0] shadow-[0_4px_16px_rgba(0,0,0,0.4)]"
    >
      <div className="flex h-[30px] items-center bg-[#008675] pb-[2px] pl-2 text-white">
        <Icon name="hammer" />
        <h1 className="ml-[6px] flex-1">合并</h1>
        <button type="button" aria-label="最小化" className="flex w-[46px] justify-center">
          <span className="h-px w-[10px] bg-white" />
        </button>
        <button type="button" aria-label="最大化" className="flex w-[46px] justify-center">
          <span className="h-[10px] w-[10px] border border-white" />
        </button>
        <button type="button" aria-label="关闭" className="flex w-[46px] justify-center">
          <svg width="11" height="11" viewBox="0 0 11 11">
            <path d="M.5 .5l10 10M10.500 .5l-10 10" stroke="#fff" strokeWidth="1.200" />
          </svg>
        </button>
      </div>

      <div className="flex h-[459px] gap-1 border-b border-white">
        <div className="flex w-[469px] overflow-hidden border-t-2 border-r border-l-2 border-[#868686] border-r-white">
          <div className="flex-1 pt-[9px] pl-[6px]">
            <FieldLabel id="in-data" text="输入数据集" required />
            <div className="flex h-[31px] items-start gap-[10px] pl-[13px]">
              <input
                id="in-data"
                value={input}
                onChange={e => setInput(e.target.value)}
                className="h-5 w-[387px] border border-[#7a7a7a] bg-white px-1"
              />
              <SideButton glyph="folder" label="浏览输入数据集" />
            </div>
            <div className="flex gap-[10px] pl-[13px]">
              <ul className="w-[387px] border border-[#828790] bg-white px-px pt-px pb-4">
                {Array.from({ length: 9 }, (_, i) => (
                  <li key={i} className="h-4 border-b border-[#ececec]" />
                ))}
              </ul>
              <div className="flex flex-col gap-[7px] pt-px">
                <SideButton glyph="plus" label="添加" />
                <SideButton glyph="x" label="移除" disabled />
                <SideButton glyph="up" label="上移" disabled />
                <span className="pt-px">
                  <SideButton glyph="down" label="下移" disabled />
                </span>
              </div>
            </div>
            <FieldLabel id="out-data" text="输出数据集" required />
            <div className="flex h-[21px] items-start gap-[10px] pl-[13px]">
              <input
                id="out-data"
                value={output}
                onChange={e => setOutput(e.target.value)}
                className="h-5 w-[387px] border border-[#7a7a7a] bg-white px-1"
              />
              <SideButton glyph="folder" label="浏览输出数据集" />
            </div>
            <FieldLabel id="field-map" text="字段映射（可选）" />
            <div className="flex gap-[7px] pl-[13px]">
              <ul id="field-map" className="h-[190px] w-[390px] border border-[#828790] bg-white" />
              <div className="flex flex-col gap-[15px] pt-px">
                <SideButton glyph="plus" label="添加字段" />
                <SideButton glyph="x" label="移除字段" />
                <SideButton glyph="up" label="字段上移" />
                <SideButton glyph="down" label="字段下移" />
              </div>
            </div>
          </div>
          <div className="flex w-[15px] shrink-0 flex-col items-center pt-4 pb-4">
            <Chevron dir="up" />
            <div className="mt-[2px] h-[341px] w-full bg-[#cdcdcd]" />
            <span className="mt-auto flex">
              <Chevron dir="down" />
            </span>
          </div>
        </div>

        <div className="flex flex-1 border-t-2 border-l-2 border-[#868686] bg-white pr-[2px]">
          <article lang="zh-Hant" className="flex-1 pt-[3px] pl-4 font-['Noto_Sans_CJK_TC',sans-serif] leading-[15px]">
            <h2 className="mb-4 text-[16px] leading-6">合并</h2>
            <p className="mb-[19px] w-[450px]">可将多个输入数据集合并为新的单个输出数据集。此工具可以合并点、线或面要素类或表。</p>
            <p>使用追加工具可将输入数据集合并到现有数据集。</p>
          </article>
          <div className="flex w-[17px] flex-col items-center justify-between bg-[#f8f8f8] py-4">
            <Chevron dir="up" color="#c4c4c4" />
            <Chevron dir="down" color="#c4c4c4" />
          </div>
        </div>
      </div>

      <div className="flex h-[43px] items-start pt-[10px] pl-[112px]">
        <button type="button" className="flex h-[21px] w-[73px] items-center justify-center border-2 border-[#0078d7] bg-[#e1e1e1] text-[12px]">
          确定
        </button>
        <button type="button" className={`ml-[7px] w-[73px] ${FOOT_BTN}`}>
          取消
        </button>
        <button type="button" className={`ml-[7px] w-[88px] ${FOOT_BTN}`}>
          环境...
        </button>
        <button type="button" className={`ml-[7px] w-[96px] ${FOOT_BTN}`}>
          &lt;&lt; 隐藏帮助
        </button>
        <button type="button" className={`ml-[23px] w-[100px] ${FOOT_BTN}`}>
          工具帮助
        </button>
      </div>
    </div>
  );
}

// numbered callouts pinned over the dialog
const NOTES = [
  { n: 1, text: '选择需要合并的shp文件', pos: 'left-[712px] top-[229px]' },
  { n: 2, text: '添加的shp文件，则会添加至当前窗体中', pos: 'left-[713px] top-[280px]' },
  { n: 3, text: '设置合并后的文件输出路径，以及文件名称', pos: 'left-[714px] top-[450px]' },
  { n: 4, text: '点击“确定”即可', pos: 'left-[555px] top-[672px]' },
];

function Notes() {
  return (
    <>
      {NOTES.map(note => (
        <div key={note.n} className={`absolute flex items-center ${note.pos}`}>
          <span className="flex h-5 w-5 items-center justify-center rounded-full bg-[#009999] text-[13px] leading-none text-white">
            {note.n}
          </span>
          <span className="ml-[5px] border-y-[4px] border-r-[4px] border-y-transparent border-r-black/60" />
          <span className="rounded-[4px] bg-black/60 pr-3 pl-[6px] text-[16px] leading-[34px] whitespace-nowrap text-white">
            {note.text}
          </span>
        </div>
      ))}
    </>
  );
}

export default function App() {
  return (
    <div
      lang="zh-CN"
      className="relative flex h-screen flex-col overflow-hidden bg-[#f0f0f0] font-['Noto_Sans_CJK_SC',sans-serif] text-[13px] leading-4 text-black"
    >
      <Header />
      <div className="flex min-h-0 flex-1">
        <Contents />
        <span className="w-1 shrink-0" />
        <MapArea />
        <Catalog />
        <ToolboxPane />
      </div>
      <footer className="flex h-5 shrink-0 items-center border-t border-[#f8f8f8]">
        <span className="ml-auto h-full w-[126px] border border-[#f8f8f8]" />
        <span className="h-full w-[21px] border border-[#f8f8f8]" />
        <span className="flex h-full w-[312px] items-center border border-[#f8f8f8] pb-[2px] pl-[4px] whitespace-pre">
          <span className="w-[65px]">1972.779</span>
          <span className="w-[60px]">3363.783</span>
          <span>未知单位</span>
        </span>
      </footer>

      <MergeDialog />
      <Notes />
      <span className="absolute right-2 bottom-2 font-['Liberation_Sans',sans-serif] text-[16px] leading-5 text-[#d8d8d8]">
        https://blog.csdn.net/weixin_43228814
      </span>
      <div className="absolute top-[841px] right-0 flex h-[58px] w-[10px] flex-col items-end justify-center gap-px rounded-l-[3px] border border-r-0 border-[#a8a89c] bg-[#4a4a4a] pr-[2px]">
        {Array.from({ length: 23 }, (_, i) => (
          <span key={i} className={`h-px w-1 shrink-0 ${i < 10 ? 'bg-[#222]' : 'bg-[#e8c83c]'}`} />
        ))}
      </div>
    </div>
  );
}
